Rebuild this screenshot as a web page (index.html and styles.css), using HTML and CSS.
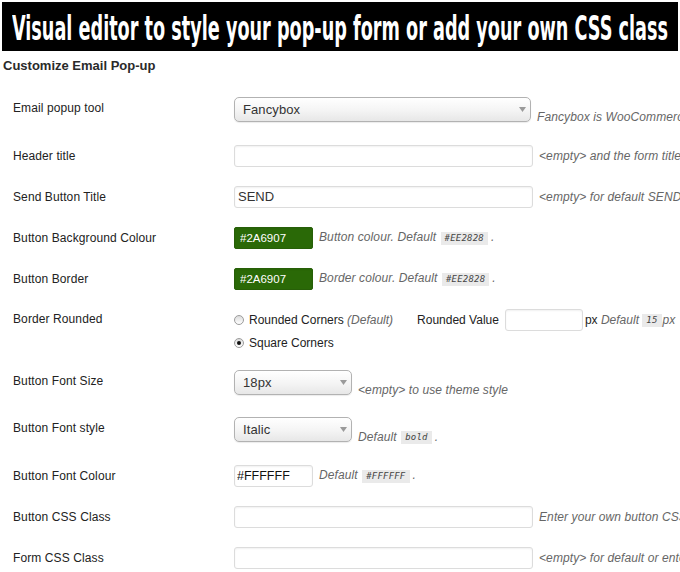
FILE: index.html
```html
<!DOCTYPE html>
<html lang="en">

<head>
    <meta charset="UTF-8">
    <meta name="viewport" content="width=device-width, initial-scale=1.0">
    <title>Customize Email Pop-up</title>
    <link rel="stylesheet" href="styles.css">
</head>

<body>
    <div class="banner">
        <h1>Visual editor to style your pop-up form or add your own CSS class</h1>
    </div>

    <h2 class="section-title">Customize Email Pop-up</h2>

    <div class="form">
        <div class="row row-select">
            <div class="label">Email popup tool</div>
            <div class="field">
                <div class="select select-wide">
                    <span>Fancybox</span>
                    <svg class="arrow" width="7" height="5" viewBox="0 0 7 5"><path d="M0 0h7L3.5 5z" fill="#9a9a9a"/></svg>
                </div>
                <span class="desc">Fancybox is WooCommerce default lightbox</span>
            </div>
        </div>

        <div class="row">
            <div class="label">Header title</div>
            <div class="field">
                <input class="input input-wide" type="text" value="">
                <span class="desc">&lt;empty&gt; and the form title will not be shown</span>
            </div>
        </div>

        <div class="row">
            <div class="label">Send Button Title</div>
            <div class="field">
                <input class="input input-wide" type="text" value="SEND">
                <span class="desc">&lt;empty&gt; for default SEND</span>
            </div>
        </div>

        <div class="row">
            <div class="label">Button Background Colour</div>
            <div class="field">
                <input class="input input-color" type="text" value="#2A6907">
                <span class="desc">Button colour. Default <code class="code">#EE2828</code>.</span>
            </div>
        </div>

        <div class="row">
            <div class="label">Button Border</div>
            <div class="field">
                <input class="input input-color" type="text" value="#2A6907">
                <span class="desc">Border colour. Default <code class="code">#EE2828</code>.</span>
            </div>
        </div>

        <div class="row row-radio">
            <div class="label">Border Rounded</div>
            <div class="radio-group">
                <div class="radio-line">
                    <span class="radio"></span>
                    <span>Rounded Corners <em class="muted">(Default)</em></span>
                    <span class="rounded-value">Rounded Value</span>
                    <input class="input input-small" type="text" value="">
                    <span class="unit">px <em class="muted">Default <code class="code">15</code>px</em></span>
                </div>
                <div class="radio-line">
                    <span class="radio checked"></span>
                    <span>Square Corners</span>
                </div>
            </div>
        </div>

        <div class="row row-select">
            <div class="label">Button Font Size</div>
            <div class="field">
                <div class="select select-narrow">
                    <span>18px</span>
                    <svg class="arrow" width="7" height="5" viewBox="0 0 7 5"><path d="M0 0h7L3.5 5z" fill="#9a9a9a"/></svg>
                </div>
                <span class="desc">&lt;empty&gt; to use theme style</span>
            </div>
        </div>

        <div class="row row-select">
            <div class="label">Button Font style</div>
            <div class="field">
                <div class="select select-narrow">
                    <span>Italic</span>
                    <svg class="arrow" width="7" height="5" viewBox="0 0 7 5"><path d="M0 0h7L3.5 5z" fill="#9a9a9a"/></svg>
                </div>
                <span class="desc">Default <code class="code">bold</code>.</span>
            </div>
        </div>

        <div class="row">
            <div class="label">Button Font Colour</div>
            <div class="field">
                <input class="input input-white" type="text" value="#FFFFFF">
                <span class="desc">Default <code class="code">#FFFFFF</code>.</span>
            </div>
        </div>

        <div class="row">
            <div class="label">Button CSS Class</div>
            <div class="field">
                <input class="input input-wide" type="text" value="">
                <span class="desc">Enter your own button CSS class</span>
            </div>
        </div>

        <div class="row">
            <div class="label">Form CSS Class</div>
            <div class="field">
                <input class="input input-wide" type="text" value="">
                <span class="desc">&lt;empty&gt; for default or enter your own form CSS class</span>
            </div>
        </div>
    </div>
</body>

</html>
```

FILE: styles.css
```css
body {
    margin: 0;
    font-family: "Liberation Sans", Arial, sans-serif;
    font-size: 12px;
    color: #222;
    background: #fff;
    overflow: hidden;
}

.banner {
    box-sizing: border-box;
    margin: 2px 2px 0;
    height: 49px;
    padding: 3px 0 0 10px;
    background: #000;
    display: flex;
    align-items: center;
    overflow: hidden;
}

.banner h1 {
    margin: 0;
    color: #fff;
    font-family: "DejaVu Sans Condensed", "DejaVu Sans", sans-serif;
    font-stretch: condensed;
    font-weight: bold;
    font-size: 34px;
    line-height: 1;
    white-space: nowrap;
    transform: scaleX(0.577);
    transform-origin: left center;
}

.section-title {
    margin: 7px 0 14px 3px;
    font-size: 13px;
    line-height: 16px;
    font-weight: bold;
    color: #2a2a2a;
}

.form {
    padding-left: 13px;
}

.row {
    display: flex;
    align-items: center;
    height: 41px;
    white-space: nowrap;
    letter-spacing: 0.1px;
}

.row-select {
    height: 47px;
    align-items: flex-start;
    padding-top: 9px;
    box-sizing: border-box;
}

.row-select .label {
    line-height: 22px;
}

.row-radio {
    height: 62px;
    align-items: flex-start;
    padding-top: 10px;
    box-sizing: border-box;
}

.row-radio .label {
    line-height: 20px;
}

.label {
    width: 221px;
    flex: none;
}

.field {
    display: flex;
    align-items: center;
    gap: 6px;
}

.row-select .field {
    align-items: flex-end;
}

.row-select .desc {
    margin-bottom: -2px;
    line-height: 14px;
}

.desc {
    font-style: italic;
    color: #666;
}

.muted {
    color: #666;
}

.code {
    display: inline-block;
    font-family: "DejaVu Sans Mono", monospace;
    font-style: italic;
    font-size: 9px;
    line-height: 13px;
    letter-spacing: 0.2px;
    padding: 0 4px;
    margin: 0 3px 0 1px;
    background: #eaeaea;
    color: #444;
    vertical-align: middle;
}

.select {
    box-sizing: border-box;
    height: 25px;
    padding: 0 4px 0 8px;
    border: 1px solid #b2b2b2;
    border-radius: 5px;
    background: linear-gradient(#fff, #f4f4f4 55%, #e7e7e7);
    box-shadow: 0 1px 1px rgba(0, 0, 0, 0.08);
    display: flex;
    align-items: center;
    justify-content: space-between;
    font-size: 13px;
    color: #333;
}

.select-wide {
    width: 297px;
}

.select-narrow {
    width: 118px;
}

.input {
    box-sizing: border-box;
    height: 22px;
    margin: 0;
    padding: 0 3px;
    border: 1px solid #dcdcdc;
    border-radius: 3px;
    background: #fff;
    box-shadow: inset 0 1px 2px rgba(0, 0, 0, 0.06);
    font-family: inherit;
    font-size: 13px;
    color: #333;
    outline: none;
}

.input-wide {
    width: 299px;
}

.input-color {
    width: 79px;
    padding-left: 5px;
    background: #2a6907;
    border-color: #275f08;
    border-radius: 2px;
    color: #fff;
    font-size: 11.5px;
}

.input-white {
    width: 79px;
    padding-left: 2px;
    font-size: 12.5px;
    color: #111;
}

.input-small {
    width: 78px;
}

.radio-group {
    display: flex;
    flex-direction: column;
    gap: 1px;
}

.radio-line {
    display: flex;
    align-items: center;
    height: 22px;
    letter-spacing: 0;
}

.radio {
    box-sizing: border-box;
    width: 10px;
    height: 10px;
    margin: 0 5px 0 0;
    border: 1px solid #9c9c9c;
    border-radius: 50%;
    background: linear-gradient(#dcdcdc, #fff);
    position: relative;
}

.radio.checked::after {
    content: "";
    position: absolute;
    left: 2px;
    top: 2px;
    width: 4px;
    height: 4px;
    border-radius: 50%;
    background: #111;
}

.rounded-value {
    margin: 0 6px 0 24px;
}

.unit {
    margin-left: 2px;
}

.unit .code {
    margin: 0 1px 0 0;
}
```
